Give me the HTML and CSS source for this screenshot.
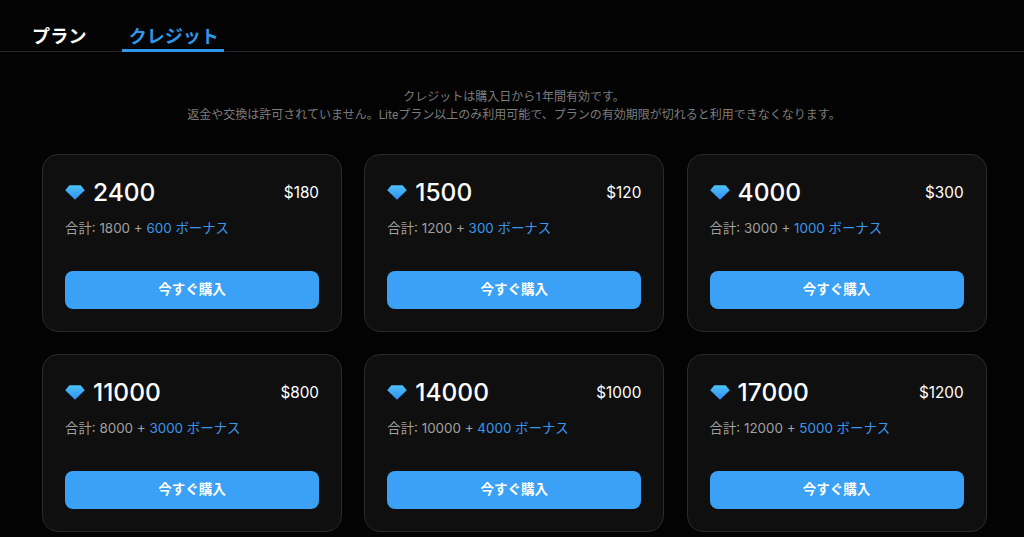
FILE: index.html
```html
<!DOCTYPE html>
<html lang="ja">
<head>
<meta charset="utf-8">
<title>クレジット</title>
<link rel="stylesheet" href="styles.css">
</head>
<body>
<svg class="defs" width="0" height="0" aria-hidden="true">
  <defs>
    <linearGradient id="gem" x1="0" y1="0" x2="0" y2="1">
      <stop offset="0" stop-color="#4fc3f7"/>
      <stop offset="1" stop-color="#2f8df5"/>
    </linearGradient>
    <symbol id="diamond" viewBox="0 0 20 15">
      <path fill="url(#gem)" d="M4.4 0.3H15.6L19.8 5.2L10 14.8L0.2 5.2Z"/>
    </symbol>
  </defs>
</svg>
<nav class="tabs">
  <a class="tab">プラン</a>
  <a class="tab active">クレジット</a>
</nav>
<p class="notice">クレジットは購入日から1年間有効です。<br>返金や交換は許可されていません。Liteプラン以上のみ利用可能で、プランの有効期限が切れると利用できなくなります。</p>
<main class="grid">
  <section class="card">
    <div class="head"><svg class="gem"><use href="#diamond"/></svg><span class="amount">2400</span><span class="price">$180</span></div>
    <p class="detail">合計: 1800 + <span class="bonus">600 ボーナス</span></p>
    <button class="buy">今すぐ購入</button>
  </section>
  <section class="card">
    <div class="head"><svg class="gem"><use href="#diamond"/></svg><span class="amount">1500</span><span class="price">$120</span></div>
    <p class="detail">合計: 1200 + <span class="bonus">300 ボーナス</span></p>
    <button class="buy">今すぐ購入</button>
  </section>
  <section class="card">
    <div class="head"><svg class="gem"><use href="#diamond"/></svg><span class="amount">4000</span><span class="price">$300</span></div>
    <p class="detail">合計: 3000 + <span class="bonus">1000 ボーナス</span></p>
    <button class="buy">今すぐ購入</button>
  </section>
  <section class="card">
    <div class="head"><svg class="gem"><use href="#diamond"/></svg><span class="amount">11000</span><span class="price">$800</span></div>
    <p class="detail">合計: 8000 + <span class="bonus">3000 ボーナス</span></p>
    <button class="buy">今すぐ購入</button>
  </section>
  <section class="card">
    <div class="head"><svg class="gem"><use href="#diamond"/></svg><span class="amount">14000</span><span class="price">$1000</span></div>
    <p class="detail">合計: 10000 + <span class="bonus">4000 ボーナス</span></p>
    <button class="buy">今すぐ購入</button>
  </section>
  <section class="card">
    <div class="head"><svg class="gem"><use href="#diamond"/></svg><span class="amount">17000</span><span class="price">$1200</span></div>
    <p class="detail">合計: 12000 + <span class="bonus">5000 ボーナス</span></p>
    <button class="buy">今すぐ購入</button>
  </section>
</main>
</body>
</html>
```
FILE: styles.css
```css
* { box-sizing: border-box; }
html, body { height: 100%; }
body {
  margin: 0;
  height: 537px;
  overflow: hidden;
  background: #030303;
  color: #fff;
  font-family: Inter, "Noto Sans CJK JP", sans-serif;
}
.defs { display: block; height: 0; }
.tabs {
  display: flex;
  height: 52px;
  padding-left: 22px;
  gap: 25px;
  border-bottom: 1px solid #24272b;
  font-family: Roboto, "Noto Sans CJK JP", sans-serif;
}
.tab {
  display: block;
  height: 52px;
  padding: 25px 10px 0;
  font-size: 18px;
  line-height: 24px;
  font-weight: 700;
  letter-spacing: 0.25px;
  color: #fff;
}
.tab.active {
  color: #2f96e8;
  border-bottom: 3px solid #2f96e8;
  letter-spacing: 0;
  padding: 25px 5px 0 7px;
}
.notice {
  margin: 36px 0 30px;
  padding-left: 4px;
  text-align: center;
  font-family: Roboto, "Noto Sans CJK JP", sans-serif;
  font-size: 12px;
  line-height: 18px;
  color: #7c7c7c;
}
.grid {
  display: grid;
  grid-template-columns: repeat(3, 300px);
  gap: 22px 22.3px;
  padding-left: 42px;
}
.card {
  height: 178px;
  padding: 21px 22px 22px;
  background: #0f0f0f;
  border: 1px solid #2a2a2a;
  border-radius: 16px;
  display: flex;
  flex-direction: column;
}
.head {
  display: flex;
  align-items: center;
  height: 32px;
}
.gem { width: 20px; height: 15px; margin-right: 8px; flex: none; }
.amount { font-size: 24.5px; font-weight: 500; }
.price { margin-left: auto; font-size: 15.3px; font-weight: 400; }
.detail {
  margin: 10px 0 0;
  font-size: 13.4px;
  line-height: 20px;
  color: #a0a0a0;
}
.bonus { color: #3a97ee; }
.buy {
  margin-top: auto;
  height: 38px;
  border: 0;
  border-radius: 8px;
  background: #3ba1f7;
  color: #fff;
  font-family: inherit;
  font-size: 13.5px;
  line-height: 34px;
  padding: 0 0 2px;
  font-weight: 700;
}
```
